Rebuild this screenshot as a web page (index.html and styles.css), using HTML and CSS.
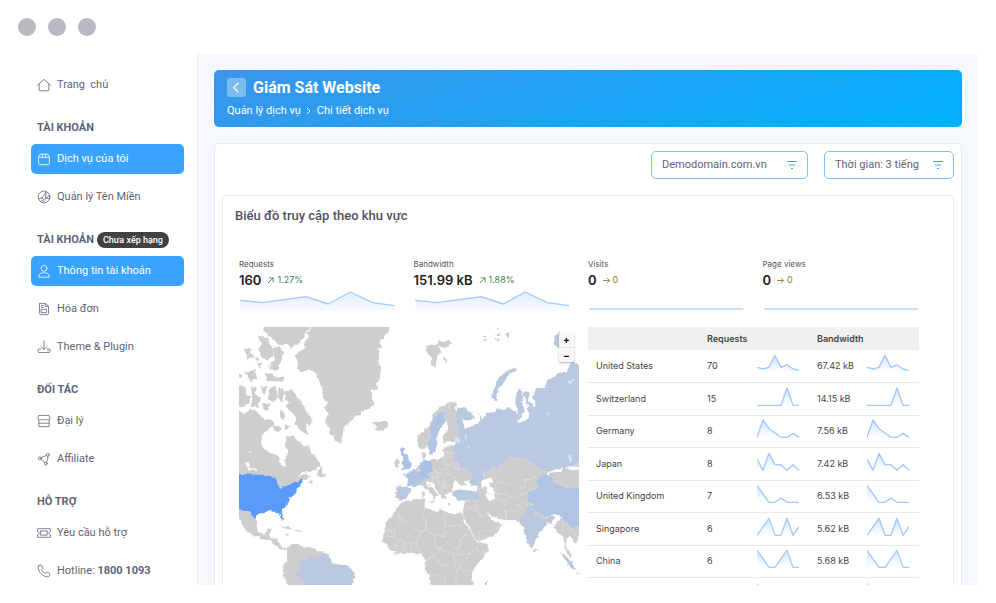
FILE: index.html
```html
<!DOCTYPE html>
<html lang="vi">
<head>
    <meta charset="UTF-8">
    <meta name="viewport" content="width=device-width, initial-scale=1">
    <title>Giám Sát Website</title>
    <link rel="stylesheet" href="styles.css">
</head>
<body>

    <!-- Shared sparkline shapes, one per country -->
    <svg class="defs" width="0" height="0" aria-hidden="true">
        <defs>
            <linearGradient id="fade" x1="0" y1="0" x2="0" y2="1">
                <stop offset="0" stop-color="#d3e4fd"/>
                <stop offset="1" stop-color="#ffffff"/>
            </linearGradient>
            <linearGradient id="fade-wide" x1="0" y1="0" x2="0" y2="1">
                <stop offset="0" stop-color="#e3edfc"/>
                <stop offset="1" stop-color="#f8faff"/>
            </linearGradient>
            <symbol id="trend" viewBox="0 0 468 60">
                <path fill="url(#fade-wide)" d="M3 31 69 38 135 29 201 20 267 42 333 6 399 38 465 47V60H3z"/>
                <path class="line" d="M3 31 69 38 135 29 201 20 267 42 333 6 399 38 465 47"/>
            </symbol>
            <symbol id="flat" viewBox="0 0 468 60">
                <path class="line line-flat" d="M3 57H465"/>
            </symbol>
            <symbol id="us" viewBox="0 0 126 72">
                <path fill="url(#fade)" d="M0 40 18 45 36 40 54 4 72 40 90 32 108 45 126 49V56H0z"/>
                <path class="line" d="M0 40 18 45 36 40 54 4 72 40 90 32 108 45 126 49"/>
            </symbol>
            <symbol id="ch" viewBox="0 0 126 72">
                <path fill="url(#fade)" d="M72 55 90 3 108 55z"/>
                <path class="line" d="M0 55H72L90 3 108 55H126"/>
            </symbol>
            <symbol id="de" viewBox="0 0 126 72">
                <path fill="url(#fade)" d="M0 55 18 3 36 29 54 42 72 55H90L108 43 126 55z"/>
                <path class="line" d="M0 55 18 3 36 29 54 42 72 55H90L108 43 126 55"/>
            </symbol>
            <symbol id="jp" viewBox="0 0 126 72">
                <path fill="url(#fade)" d="M0 21 18 55 36 4 54 38H72L90 55 108 38 126 55H0z"/>
                <path class="line" d="M0 21 18 55 36 4 54 38H72L90 55 108 38 126 55"/>
            </symbol>
            <symbol id="gb" viewBox="0 0 126 72">
                <path fill="url(#fade)" d="M0 4 36 55H54L72 42 90 55H0z"/>
                <path class="line" d="M0 4 36 55H54L72 42 90 55H126"/>
            </symbol>
            <symbol id="sg" viewBox="0 0 126 72">
                <path fill="url(#fade)" d="M0 55 36 4 54 55H72L90 4 108 55 126 29V55z"/>
                <path class="line" d="M0 55 36 4 54 55H72L90 4 108 55 126 29"/>
            </symbol>
            <symbol id="cn" viewBox="0 0 126 72">
                <path fill="url(#fade)" d="M0 4 36 55H54L90 4 108 55H0z"/>
                <path class="line" d="M0 4 36 55H54L90 4 108 55H126"/>
            </symbol>
            <symbol id="other" viewBox="0 0 126 72">
                <path class="line" d="M0 4 18 55H126"/>
            </symbol>
        </defs>
    </svg>

    <div class="titlebar">
        <span class="dot"></span>
        <span class="dot"></span>
        <span class="dot"></span>
    </div>

    <div class="app">
        <!-- Sidebar -->
        <nav class="sidebar">
            <a class="item" href="#">
                <svg class="icon" viewBox="0 0 14 14"><path d="M.6 7.2 7 1.4l6.400 5.800M2.200 6v6c0 .5.3.8.8.8h8c.5 0 .8-.3.8-.8V6"/></svg>
                <span>Trang&nbsp; chủ</span>
            </a>

            <h2 class="group">TÀI KHOẢN</h2>
            <a class="item active" href="#">
                <svg class="icon" viewBox="0 0 14 14"><path d="M1.700 4.900 3 2.200h8l1.300 2.700v6.900c0 .5-.3.800-.8.800h-9c-.5 0-.8-.3-.8-.8zM1.700 5.200h10.600M5.400 2.200v3.800M8.600 2.200v3.800"/></svg>
                <span>Dịch vụ của tôi</span>
            </a>
            <a class="item" href="#">
                <svg class="icon" viewBox="0 0 14 14"><circle cx="7" cy="7" r="5.900"/><path d="M1.500 8.800 5 8l3.800-5.800M12.600 5.500 8.800 8.100 6 12.200M5 8l1.400 1.600-3 1.900M8.800 2.200v5.900l3.800.8"/></svg>
                <span>Quản lý Tên Miền</span>
            </a>

            <h2 class="group">TÀI KHOẢN <span class="badge">Chưa xếp hạng</span></h2>
            <a class="item active" href="#">
                <svg class="icon" viewBox="0 0 14 14"><circle cx="7" cy="4.400" r="2.900"/><path d="M1.800 12.800c0-2.300 1.500-3.900 3.400-3.900h3.600c1.900 0 3.400 1.600 3.400 3.900z"/></svg>
                <span>Thông tin tài khoản</span>
            </a>
            <a class="item" href="#">
                <svg class="icon" viewBox="0 0 14 14"><path d="M2.700 1.400h5.800l3 3v7.200c0 .6-.4 1-1 1H3.700c-.6 0-1-.4-1-1zM8.300 1.600v3h3M4.400 3.600h2M4.400 5.400h2M4.500 7.400h5v3.200h-5z"/></svg>
                <span>Hóa đơn</span>
            </a>
            <a class="item" href="#">
                <svg class="icon" viewBox="0 0 14 14"><path d="M7 1v8.300M4.200 6.700 7 9.500l2.800-2.800M4 9H1.800c-.5 0-.8.3-.8.8v2c0 .5.3.8.8.8h10.400c.5 0 .8-.3.8-.8v-2c0-.5-.3-.8-.8-.8H10M10.800 10.800h.6"/></svg>
                <span>Theme &amp; Plugin</span>
            </a>

            <h2 class="group">ĐỐI TÁC</h2>
            <a class="item" href="#">
                <svg class="icon" viewBox="0 0 14 14"><path d="M2 1.400h10l1 3.400c0 1.200-1.800 1.500-2.400.4-.7 1.100-1.800 1.100-2.400 0-.6 1.100-1.800 1.100-2.400 0-.6 1.100-1.800 1.100-2.400 0C2.800 6.300 1 6 1 4.800zM1.800 6v6.600h10.400V6M1.800 9.200h10.400"/></svg>
                <span>Đại lý</span>
            </a>
            <a class="item" href="#">
                <svg class="icon" viewBox="0 0 14 14"><circle cx="2.800" cy="6.300" r="1.500"/><circle cx="10.800" cy="2.800" r="1.500"/><circle cx="8.800" cy="11.600" r="1.500"/><path d="M4.200 5.700 9.400 3.400M3.900 7.400l3.700 3.200M10.900 4.400c.2 2-.3 4-1.500 5.700"/></svg>
                <span>Affiliate</span>
            </a>

            <h2 class="group">HỖ TRỢ</h2>
            <a class="item" href="#">
                <svg class="icon" viewBox="0 0 14 14"><path d="M.6 2.700h12.800v2.500c-2 .3-2 3.300 0 3.600v2.500H.6V8.800c2-.3 2-3.300 0-3.600zM3.800 4.900h6.400v4.200H3.800z"/></svg>
                <span>Yêu cầu hỗ trợ</span>
            </a>
            <a class="item" href="#">
                <svg class="icon" viewBox="0 0 14 14"><path d="M2 1.600 3.600 1c.5-.2.9 0 1.100.5l1 2.300c.2.500 0 .8-.3 1.100l-.9.8c.7 1.700 1.900 2.900 3.600 3.700l.9-.9c.3-.4.7-.5 1.100-.3l2.300 1c.5.2.7.6.5 1.100l-.6 1.600c-.2.6-.6.9-1.200.9C5.600 12.800 1.200 8.300 1.200 2.800c0-.6.3-1 .8-1.200z"/></svg>
                <span>Hotline: <b>1800 1093</b></span>
            </a>
        </nav>

        <main class="main">
            <header class="banner">
                <div class="banner-top">
                    <button class="back" type="button" aria-label="Quay lại">
                        <svg viewBox="0 0 20 20"><path d="M12 5 7 10l5 5"/></svg>
                    </button>
                    <h1>Giám Sát Website</h1>
                </div>
                <div class="crumbs">
                    <a href="#">Quản lý dịch vụ</a>
                    <svg viewBox="0 0 6 8"><path d="M1 1l3 3-3 3"/></svg>
                    <span>Chi tiết dịch vụ</span>
                </div>
            </header>

            <section class="card">
                <div class="filters">
                    <label class="filter filter-domain">
                        <select aria-label="Tên miền">
                            <option>Demodomain.com.vn</option>
                        </select>
                        <svg viewBox="0 0 10 10"><path d="M0 1.500h10M2 5h6M4 8.500h2"/></svg>
                    </label>
                    <label class="filter filter-time">
                        <select aria-label="Thời gian">
                            <option>Thời gian: 3 tiếng</option>
                        </select>
                        <svg viewBox="0 0 10 10"><path d="M0 1.500h10M2 5h6M4 8.500h2"/></svg>
                    </label>
                </div>

                <div class="panel">
                    <h3>Biểu đồ truy cập theo khu vực</h3>

                    <div class="stats">
                        <div class="stat">
                            <div class="label">Requests</div>
                            <div class="value">160
                                <span class="up"><svg viewBox="0 0 8 8"><path d="M1 7 7 1M2 1h5v5"/></svg>1.27%</span>
                            </div>
                            <svg class="trend"><use href="#trend"/></svg>
                        </div>
                        <div class="stat">
                            <div class="label">Bandwidth</div>
                            <div class="value">151.99 kB
                                <span class="up"><svg viewBox="0 0 8 8"><path d="M1 7 7 1M2 1h5v5"/></svg>1.88%</span>
                            </div>
                            <svg class="trend"><use href="#trend"/></svg>
                        </div>
                        <div class="stat">
                            <div class="label">Visits</div>
                            <div class="value">0
                                <span class="same"><svg viewBox="0 0 8 8"><path d="M0 4h7.500M4.500 1l3 3-3 3"/></svg>0</span>
                            </div>
                            <svg class="trend"><use href="#flat"/></svg>
                        </div>
                        <div class="stat">
                            <div class="label">Page views</div>
                            <div class="value">0
                                <span class="same"><svg viewBox="0 0 8 8"><path d="M0 4h7.500M4.500 1l3 3-3 3"/></svg>0</span>
                            </div>
                            <svg class="trend"><use href="#flat"/></svg>
                        </div>
                    </div>

                    <div class="details">
                        <div class="map">
                            <svg viewBox="12 22 1020 774" role="img" aria-label="Bản đồ truy cập">
                                <defs>
                                    <filter id="coast" x="-5%" y="-5%" width="110%" height="110%" color-interpolation-filters="sRGB">
                                        <feTurbulence type="fractalNoise" baseFrequency="0.06" numOctaves="3" seed="4"/>
                                        <feDisplacementMap in="SourceGraphic" scale="13" xChannelSelector="R" yChannelSelector="G"/>
                                    </filter>
                                </defs>
                                <g filter="url(#coast)">
                                    <!-- North America -->
                                    <g class="land">
                                        <path d="M-9 272 28 280 45 268 75 280 78 294 108 300 118 312 98 332 80 350 78 370 86 390 110 400 132 412 140 440 150 442 152 420 158 400 150 380 155 350 175 348 195 365 208 384 218 376 228 400 245 415 260 438 235 452 205 458 188 468 212 462 228 470 212 482 195 475 190 488 150 500 135 508 128 480 110 470 85 465-9 462z"/>
                                        <path d="M248 470 252 452 262 440 264 458 272 474z"/>
                                        <path d="M212 492 234 484 230 492z"/>
                                        <path d="M148 215 168 210 180 226 200 246 212 276 232 296 226 318 212 306 218 346 196 332 178 310 186 296 164 274 150 262 168 250 150 238z"/>
                                        <path d="M140 272 150 282 142 298 132 290z"/>
                                        <path d="M110 314 130 318 138 334 120 334z"/>
                                        <path d="M150 310 164 322 150 330z"/>
                                        <path d="M98 -2H236L214 40 196 64 168 86 150 72 128 74 118 60 102 50 84 30z"/>
                                        <path d="M72 48 94 52 108 76 116 104 98 126 82 114 72 86 80 70z"/>
                                        <path d="M112 84 136 80 148 100 138 126 126 150 104 152 104 130 120 122z"/>
                                        <path d="M86 164 112 160 116 172 148 168 146 186 96 184z"/>
                                        <path d="M28 90 50 88 46 100 60 112 36 118z"/>
                                        <path d="M62 110 74 116 70 126 58 124z"/>
                                        <path d="M-6 160 22 164 24 178 6 174z"/>
                                        <path d="M30 156 62 150 66 180 46 186z"/>
                                        <path d="M66 134 82 132 76 144z"/>
                                        <path d="M-4 196 30 198 34 226 48 232 36 260-4 262z"/>
                                        <path d="M48 200 66 204 60 222 78 234 68 264 46 262 52 238z"/>
                                        <path d="M78 200 96 202 90 226 82 222z"/>
                                        <path d="M102 206 122 198 128 228 114 250 98 240z"/>
                                        <path d="M130 204 146 212 142 246 128 240z"/>
                                        <path d="M82 250 104 252 100 272 84 268z"/>
                                    </g>
                                    <path class="land" d="M236-2H474L460 38 446 52 434 62 440 80 426 90 436 106 430 125 438 150 434 178 422 188 430 206 404 214 412 235 418 252 405 266 390 272 372 285 352 302 334 315 325 338 318 372 300 362 288 345 278 318 270 300 282 284 266 262 276 252 262 235 262 205 245 165 225 152 200 158 185 145 192 125 178 110 195 95 212 88 205 70 222 55 218 42z"/>
                                    <path class="land" d="M412 310 424 304 424 312 440 308 454 306 458 318 446 330 430 334 418 328 424 322z"/>
                                    <path class="hot" d="M-9 462 85 465 110 470 128 480 135 508 150 500 175 490 190 488 195 475 205 478 204 490 190 500 185 515 172 528 165 535 162 550 145 568 140 580 147 600 140 603 133 585 128 577 100 575 70 582 62 597 45 580 35 578 20 570-9 566z"/>
                                    <path class="sea" d="M28 430 42 426 48 446 68 450 64 456 46 450zM36 400 48 390 44 402z"/>

                                    <!-- Central and South America -->
                                    <path class="land" d="M-9 566 20 570 45 580 62 597 64 614 68 635 85 645 95 640 98 626 112 626 108 644 104 652 126 656 130 672 145 685 160 686 150 692 125 682 110 665 85 658 55 645 30 630 12 596-9 580z"/>
                                    <path class="land" d="M136 618 160 620 176 630 160 628zM178 632 202 634 190 640zM152 644 162 644 158 650z"/>
                                    <path class="land" d="M156 684 178 672 202 680 232 684 262 698 280 702 286 726 300 760 300 812 166 812 146 768 142 742 156 720z"/>
                                    <path class="blue-3" d="M180 760 198 742 192 722 216 724 228 710 250 714 262 704 280 702 286 726 306 734 340 742 360 756 356 776 345 812 216 812 206 780 190 776z"/>

                                    <g transform="translate(495 0)">
                                        <!-- Africa -->
                                        <path class="land" d="M5 548 50 540 75 538 74 560 104 578 120 568 150 582 175 580 190 586 194 606 214 640 230 668 268 672 262 695 235 730 215 760 220 812H92L90 770 75 745 76 720 65 705 40 700 10 700-10 702-30 690-52 665-48 635-38 605-20 580-5 560z"/>
                                        <path class="land" d="M252 812 256 790 264 782 264 812z"/>

                                        <!-- Middle East and Central Asia -->
                                        <path class="land" d="M194 545 236 540 256 576 270 592 282 602 308 616 292 640 262 654 232 666 214 636 200 606 188 580z"/>
                                        <path class="land" d="M250 455 282 444 300 444 310 425 350 412 375 420 400 430 420 450 444 458 436 476 414 500 384 520 388 546 400 556 388 566 376 580 362 610 345 600 320 602 296 598 268 584 254 576 232 542 228 520 232 505 252 508 256 480z"/>
                                        <path class="sea" d="M254 476 276 474 280 484 266 494 282 514 284 536 268 544 256 526 262 508 250 492z"/>

                                        <!-- Europe -->
                                        <path class="land" d="M52 348 70 335 88 318 100 285 118 262 135 255 150 246 174 252 164 262 168 290 178 340 160 366 134 368 130 345 145 325 138 296 134 278 115 278 100 290 90 320 86 375 65 390 52 378z"/>
                                        <path class="land" d="M68 400 78 396 74 420 66 418z"/>
                                        <path class="land" d="M94 422 130 412 128 386 160 376 166 405 172 430 182 446 216 456 214 480 190 486 196 498 180 496 166 480 158 500 156 518 134 520 140 542 126 536 108 504 88 488 76 488 94 506 116 522 108 530 100 544 94 524 76 502 60 496 58 480 84 474z"/>
                                        <path class="land" d="M86 542 102 542 100 550zM66 516 74 514 74 530 66 532zM136 552 154 554 146 558zM-12 502-4 506-6 536-14 536zM-14 422-4 414-2 430-10 442-18 438z"/>
                                        <path class="land" d="M50 444 62 428 64 450 50 454z"/>
                                        <path class="blue-2" d="M100 290 115 278 136 278 138 305 120 325 112 350 112 376 100 406 90 410 84 385 88 350 90 320z"/>
                                        <path class="blue-1" d="M4 386 14 384 12 398 22 408 28 424 36 432 32 446 8 452 2 450 14 440 6 430 10 416 2 404z"/>
                                        <path class="blue-2" d="M8 466 24 462 40 447 54 455 72 465 64 482 62 498 40 500 22 498 24 476z"/>
                                        <path class="blue-1" d="M62 428 80 420 96 424 98 450 84 464 92 476 64 480 58 455z"/>
                                        <path class="blue-3" d="M-12 500 36 502 28 518 18 538-4 544-8 534z"/>
                                        <path class="blue-3" d="M157 517 175 510 200 512 234 516 238 532 226 540 195 543 170 540 158 530z"/>

                                        <!-- Russia -->
                                        <path class="blue-3" d="M160 378 172 350 176 325 168 300 166 275 174 262 196 266 216 280 224 295 208 304 186 298 194 312 198 326 214 320 228 316 242 302 236 280 246 296 258 292 262 278 286 278 290 266 312 270 326 262 346 274 356 290 350 262 343 240 348 218 360 206 370 225 365 250 374 272 364 292 352 304 376 302 388 286 382 256 370 232 372 214 392 220 384 238 402 262 406 250 398 230 410 205 435 205 440 185 470 165 500 155 510 136 520 126 558 160V446L510 440 490 443 460 452 444 458 420 450 400 430 375 420 350 412 310 425 300 444 282 444 250 455 252 476 242 490 254 510 232 503 206 490 216 472 214 456 182 446 168 420 160 402z"/>
                                        <path class="sea" d="M374 226 382 256 388 286 376 304 356 306 368 290 374 272 368 250z"/>
                                        <path class="blue-3" d="M348 142 350 154 325 165 304 195 290 220 292 246 274 236 280 215 288 190 308 164 330 150zM460 50 480 36 482 70 476 84 462 76zM244 50 262 48 256 56zM284 44 298 38 294 48zM284 58 300 54 292 64zM312 46 332 40 326 52zM248 64 258 60 254 66zM292 28 302 26 296 32z"/>
                                        <path class="lake" d="M170 352 182 360 178 372 168 366zM192 344 202 352 200 364zM204 374 210 384 206 390zM438 280 448 276 444 290zM500 184 524 180 516 190 504 196zM504 408 512 402 516 424 508 428zM520 440 536 424 536 432z"/>

                                        <!-- Asia -->
                                        <path class="blue-2" d="M380 520 400 510 414 498 414 480 434 464 454 468 462 486 490 500 558 508V616L520 622 490 610 480 588 465 583 440 592 410 578 388 562 400 552 386 544z"/>
                                        <path class="land" d="M446 460 485 455 490 440 510 450 558 458V508L490 500 462 486 452 470z"/>
                                        <path class="land" d="M402 576 412 576 440 590 440 598 416 592zM442 596 462 600 458 612 444 612z"/>
                                        <path class="blue-3" d="M374 562 390 558 404 574 408 586 440 598 444 590 468 588 462 604 442 604 440 616 416 640 406 664 396 688 384 670 372 640 370 620 358 612 366 596 376 580z"/>
                                        <path class="land" d="M404 684 412 690 408 698 402 694zM470 610 485 588 495 612 520 622 558 614 536 640 534 662 526 674 510 650 500 656 497 678 512 700 514 716 500 698 492 674 490 650 472 640 464 620z"/>
                                        <path class="blue-3" d="M478 696 500 712 516 730 528 750 516 748 495 722zM526 758 540 760 536 764z"/>

                                        <!-- Svalbard -->
                                        <path class="land" d="M80 78 100 74 112 72 124 96 112 112 106 144 96 136 92 112 82 100zM114 62 132 66 152 60 154 74 134 86 118 80zM128 108 138 118 142 130 132 128z"/>

                                        <!-- Borders -->
                                        <path class="border" d="M-48 635-15 632 5 600-20 582M5 600 60 636 80 632 76 600 68 575 76 560M76 600 80 632 104 646 134 648V578M134 618H190M104 646 104 680 120 690 140 668 176 690 180 660 206 640M60 636 50 672 56 690 70 704M50 672 10 668-20 650-48 652M-15 632-20 650M-10 668V702M10 668 14 700M32 670 36 700M76 720 100 712 120 690 160 705 210 700 230 680 240 704 262 695M160 705 166 750 210 752M166 750 170 800M100 712 120 736 160 740M90 770 130 768 140 800M180 725 184 745M210 700 190 730"/>
                                        <path class="border" d="M236 540 222 560 198 572M222 560 240 586 270 592M232 666 240 636 282 630 308 616M262 520 290 524 312 520 336 536 352 530 384 520M290 524 286 490 320 488 350 512 378 500 372 480 410 476M336 536 312 548 316 576 320 602M352 560 380 540M316 576 350 574 384 552M286 536 312 548"/>
                                        <path class="border" d="M130 412 136 434 170 432M96 450 120 456 140 446 136 434M140 446 178 448M90 476 108 470 120 456 152 466 166 480M108 470 112 490 132 492 158 496M132 492 126 520M130 398H162M122 412 160 408M100 470 96 488M118 500 146 506M132 478 136 492M150 250 148 276M120 266 134 278M490 598 486 640 500 656M510 620 526 650"/>
                                    </g>
                                </g>
                            </svg>
                            <div class="zoom">
                                <button type="button" aria-label="Phóng to">+</button>
                                <button type="button" aria-label="Thu nhỏ">−</button>
                            </div>
                        </div>

                        <table class="countries">
                            <colgroup>
                                <col class="col-name"><col class="col-num"><col class="col-spark"><col class="col-num"><col class="col-spark">
                            </colgroup>
                            <thead>
                                <tr><th></th><th colspan="2">Requests</th><th colspan="2">Bandwidth</th></tr>
                            </thead>
                            <tbody>
                                <tr>
                                    <td>United States</td>
                                    <td>70</td><td><svg class="spark"><use href="#us"/></svg></td>
                                    <td>67.42 kB</td><td><svg class="spark"><use href="#us"/></svg></td>
                                </tr>
                                <tr>
                                    <td>Switzerland</td>
                                    <td>15</td><td><svg class="spark"><use href="#ch"/></svg></td>
                                    <td>14.15 kB</td><td><svg class="spark"><use href="#ch"/></svg></td>
                                </tr>
                                <tr>
                                    <td>Germany</td>
                                    <td>8</td><td><svg class="spark"><use href="#de"/></svg></td>
                                    <td>7.56 kB</td><td><svg class="spark"><use href="#de"/></svg></td>
                                </tr>
                                <tr>
                                    <td>Japan</td>
                                    <td>8</td><td><svg class="spark"><use href="#jp"/></svg></td>
                                    <td>7.42 kB</td><td><svg class="spark"><use href="#jp"/></svg></td>
                                </tr>
                                <tr>
                                    <td>United Kingdom</td>
                                    <td>7</td><td><svg class="spark"><use href="#gb"/></svg></td>
                                    <td>6.53 kB</td><td><svg class="spark"><use href="#gb"/></svg></td>
                                </tr>
                                <tr>
                                    <td>Singapore</td>
                                    <td>6</td><td><svg class="spark"><use href="#sg"/></svg></td>
                                    <td>5.62 kB</td><td><svg class="spark"><use href="#sg"/></svg></td>
                                </tr>
                                <tr>
                                    <td>China</td>
                                    <td>6</td><td><svg class="spark"><use href="#cn"/></svg></td>
                                    <td>5.68 kB</td><td><svg class="spark"><use href="#cn"/></svg></td>
                                </tr>
                                <tr>
                                    <td></td>
                                    <td></td><td><svg class="spark"><use href="#other"/></svg></td>
                                    <td></td><td><svg class="spark"><use href="#other"/></svg></td>
                                </tr>
                            </tbody>
                        </table>
                    </div>
                </div>
            </section>
        </main>
    </div>

</body>
</html>
```
FILE: styles.css
```css
* {
    box-sizing: border-box;
}

body {
    margin: 0;
    height: 100vh;
    padding: 0 18px 18px 0;
    display: flex;
    flex-direction: column;
    overflow: hidden;
    background: #fff;
    color: #5f6377;
    font-family: Roboto, sans-serif;
    font-size: 11px;
    line-height: 16px;
}

h1, h2, h3 {
    margin: 0;
}

a {
    color: inherit;
    text-decoration: none;
}

button, select {
    font: inherit;
    color: inherit;
    cursor: pointer;
}

svg {
    display: block;
    fill: none;
}

.defs {
    position: absolute;
}

/* Window bar */
.titlebar {
    flex: none;
    display: flex;
    gap: 12px;
    padding: 18px;
}

.dot {
    width: 18px;
    height: 18px;
    border-radius: 50%;
    background: #b9b9c3;
}

.app {
    flex: 1;
    min-height: 0;
    display: flex;
    overflow: hidden;
}

/* Sidebar */
.sidebar {
    flex: none;
    width: 198px;
    display: flex;
    flex-direction: column;
    gap: 8px;
    padding: 16px 13px 0 31px;
    border-right: 1px solid #eceff1;
}

.item {
    flex: none;
    display: flex;
    align-items: center;
    gap: 6px;
    height: 30px;
    padding: 0 6px;
    border-radius: 5px;
}

.item.active {
    background: #38a4ff;
    color: #fff;
}

.icon {
    width: 14px;
    height: 14px;
    stroke: currentColor;
    stroke-width: 0.8;
    stroke-linejoin: round;
    stroke-linecap: round;
}

.group {
    flex: none;
    display: flex;
    align-items: center;
    gap: 3px;
    height: 16px;
    margin-top: 12px;
    padding-left: 6px;
    font-size: 11px;
    font-weight: 700;
    line-height: 18px;
    white-space: nowrap;
}

.badge {
    padding: 0 6px;
    border-radius: 8px;
    background: #414141;
    color: #fff;
    font-size: 9px;
    font-weight: 500;
    line-height: 16px;
}

/* Content */
.main {
    flex: 1;
    min-width: 0;
    display: flex;
    flex-direction: column;
    gap: 16px;
    padding: 16px 16px 0;
    background: #f5f9fd;
}

.banner {
    flex: none;
    padding: 8px 13px;
    border-radius: 5px;
    background: linear-gradient(160deg, #3b95ea, #00b0ff);
    color: #fff;
}

.banner-top {
    display: flex;
    align-items: center;
    gap: 7px;
}

.banner h1 {
    font-size: 16px;
    font-weight: 700;
}

.back {
    width: 19px;
    height: 19px;
    padding: 0;
    border: 0;
    border-radius: 3px;
    background: rgba(255, 255, 255, 0.35);
}

.back svg {
    stroke: #fff;
    stroke-width: 1.2;
}

.crumbs {
    display: flex;
    align-items: center;
    gap: 5px;
    margin-top: 6px;
}

.crumbs svg {
    width: 6px;
    height: 8px;
    stroke: #fff;
}

.card {
    flex: 1 0 auto;
    padding: 7px 7px 0;
    border: 1px solid #e9ecef;
    border-bottom: 0;
    border-radius: 5px 5px 0 0;
    background: #fff;
}

.filters {
    display: flex;
    justify-content: flex-end;
    gap: 16px;
    margin-bottom: 16px;
}

.filter {
    display: flex;
    align-items: center;
    height: 28px;
    padding: 0 10px;
    border: 1px solid #7cc1fb;
    border-radius: 5px;
}

.filter-domain {
    width: 157px;
}

.filter-time {
    width: 130px;
}

.filter select {
    flex: 1;
    min-width: 0;
    padding: 0;
    border: 0;
    appearance: none;
    background: none;
}

.filter svg {
    width: 10px;
    height: 10px;
    stroke: #38a4ff;
}

.panel {
    padding: 12px 34px 0 16px;
    border: 1px solid #e9ecef;
    border-bottom: 0;
    border-radius: 5px 5px 0 0;
}

.panel h3 {
    margin-left: -4px;
    font-size: 13px;
    font-weight: 500;
    color: #4f5264;
}

/* Totals */
.stats {
    display: grid;
    grid-template-columns: repeat(4, 1fr);
    gap: 18px;
    margin-top: 34px;
    font-family: Inter, sans-serif;
}

.label {
    font-size: 8px;
    line-height: 12px;
    color: #555;
}

.value {
    display: flex;
    align-items: center;
    gap: 6px;
    height: 20px;
    font-size: 13px;
    font-weight: 600;
    color: #222;
}

.value span {
    display: flex;
    align-items: center;
    gap: 3px;
    font-size: 9px;
    font-weight: 400;
}

.value svg {
    width: 7px;
    height: 7px;
    stroke: currentColor;
}

.up {
    color: #3c7f4c;
}

.same {
    color: #8a7a2c;
}

.trend {
    width: 100%;
    height: 20px;
}

.line {
    stroke: #a3c8f9;
    stroke-width: 4;
    stroke-linejoin: round;
}

.line-flat {
    stroke: #b7d4fb;
    stroke-width: 5;
}

/* Map and table */
.details {
    display: grid;
    grid-template-columns: 340fr 331fr;
    gap: 9px;
    align-items: start;
    margin-top: 17px;
}

.map {
    position: relative;
}

.map > svg {
    width: 100%;
}

.land {
    fill: #cecece;
}

.hot {
    fill: #5a9bfa;
}

.blue-1 {
    fill: #a9c1e6;
}

.blue-2 {
    fill: #b0c5e3;
}

.blue-3 {
    fill: #bac8e0;
}

.sea {
    fill: #fff;
}

.lake {
    fill: #d3e3fa;
}

.border {
    stroke: #e4e4e4;
    stroke-width: 2;
}

.zoom {
    position: absolute;
    top: 5px;
    right: 5px;
    display: flex;
    flex-direction: column;
    border-radius: 2px;
    background: #f8f8f8;
    box-shadow: 0 1px 2px rgba(0, 0, 0, 0.3);
}

.zoom button {
    width: 15px;
    height: 15px;
    padding: 0;
    border: 0;
    background: none;
    color: #111;
    font: 700 10px/15px Inter, sans-serif;
}

.zoom button + button {
    border-top: 1px solid #e8e8e8;
}

.countries {
    width: 100%;
    table-layout: fixed;
    border-collapse: collapse;
    font-family: Inter, sans-serif;
    font-size: 9px;
    line-height: 12px;
    color: #444;
}

.col-num {
    width: 50px;
}

.col-spark {
    width: 60px;
}

.countries th,
.countries td {
    padding: 0 0 0 8px;
    text-align: left;
    white-space: nowrap;
}

.countries th {
    height: 23px;
    background: #f0f0f0;
    font-weight: 600;
}

.countries td {
    height: 32px;
    border-bottom: 1px solid #e9e9e9;
}

.countries tr:nth-child(even) td {
    height: 33px;
}

.spark {
    width: 42px;
    height: 24px;
    overflow: visible;
}
```
